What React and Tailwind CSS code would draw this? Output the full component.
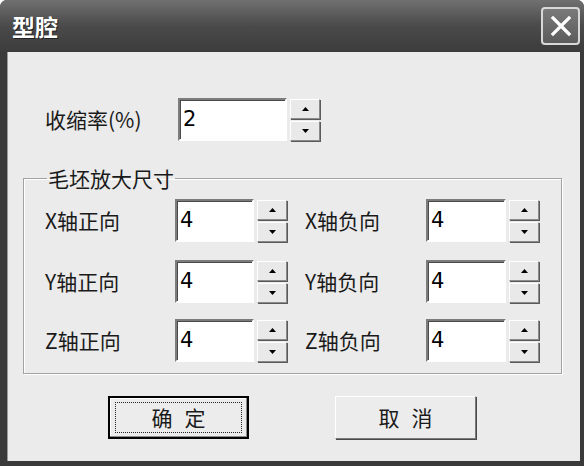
import React from 'react';

const cjk = { fontFamily: '"Noto Sans CJK SC", "Liberation Sans", sans-serif' };

// tiny arrow used on the spin buttons
const Arrow = ({ up }) => (
  <svg width="7" height="4" viewBox="0 0 7 4">
    {up ? <path d="M0 4 L3.5 0 L7 4 Z" fill="#000" /> : <path d="M0 0 L3.5 4 L7 0 Z" fill="#000" />}
  </svg>
);

const SpinButton = ({ up }) => (
  <div className="flex h-[20px] w-[30px] items-center justify-center border border-t-white border-l-white border-r-[#8a8a8a] border-b-[#8a8a8a] bg-[#e9e9e9] shadow-[1px_1px_0_#5a5a5a]">
    <Arrow up={up} />
  </div>
);

const Spinner = ({ value, width }) => (
  <div className="flex items-center gap-[3px]">
    <div
      className={`flex h-[43px] items-center border-2 border-t-[#7c7c7c] border-l-[#7c7c7c] border-r-white border-b-white bg-white pl-[3px] shadow-[inset_1px_1px_0_#4a4a4a] ${width}`}
    >
      <span className="text-[21px] leading-none text-black" style={{ fontFamily: '"DejaVu Sans", sans-serif' }}>
        {value}
      </span>
    </div>
    <div className="flex flex-col gap-[2px]">
      <SpinButton up />
      <SpinButton />
    </div>
  </div>
);

const AxisRow = ({ axis, className }) => (
  <div className={`flex items-center ${className}`}>
    <div className="w-[130px] text-[21px] leading-none text-[#1a1a1a]" style={cjk}>
      {axis}轴正向
    </div>
    <Spinner value="4" width="w-[79px]" />
    <div className="ml-[18px] w-[121px] text-[21px] leading-none text-[#1a1a1a]" style={cjk}>
      {axis}轴负向
    </div>
    <Spinner value="4" width="w-[80px]" />
  </div>
);

const Label2 = ({ a, b }) => (
  <span className="flex gap-[12px] text-[21px] leading-none text-[#1a1a1a]" style={cjk}>
    <span>{a}</span>
    <span>{b}</span>
  </span>
);

export default function App() {
  return (
    <div className="h-[470px] w-[588px] bg-white">
      <div className="flex h-[466px] w-[584px] flex-col rounded-t-[7px] bg-[#3a3a3a]">
        {/* title bar */}
        <div className="flex h-[52px] items-center justify-between rounded-t-[7px] bg-gradient-to-b from-[#707070] via-[#4a4a4a] to-[#3c3c3c] pl-[12px] pr-[4px]">
          <span
            className="text-[23px] font-bold leading-none text-white [text-shadow:1px_1px_0_#222]"
            style={cjk}
          >
            型腔
          </span>
          <div className="flex h-[38px] w-[39px] items-center justify-center rounded-[4px] border-2 border-[#d8d8d8] bg-gradient-to-b from-[#7a7a7a] to-[#5c5c5c]">
            <svg width="24" height="24" viewBox="0 0 24 24">
              <path d="M4 4 L20 20 M20 4 L4 20" stroke="#fff" strokeWidth="3.2" strokeLinecap="square" />
            </svg>
          </div>
        </div>

        {/* dialog body */}
        <div className="ml-[7px] mr-[4px] mb-[5px] flex flex-1 flex-col bg-[#ebebeb] shadow-[inset_1px_0_0_#9a9a9a]">
          <div className="mt-[46px] flex items-center">
            <div className="ml-[38px] w-[133px] text-[21px] leading-none text-[#1a1a1a]" style={cjk}>
              收缩率(%)
            </div>
            <Spinner value="2" width="w-[109px]" />
          </div>

          <fieldset className="ml-[16px] mt-[23px] h-[210px] w-[539px] border border-[#a2a2a2] px-[21px] shadow-[inset_1px_1px_0_#fff,1px_1px_0_#fff]">
            <legend className="ml-[2px] px-[1px] text-[21px] leading-[28px] text-[#1a1a1a]" style={cjk}>
              毛坯放大尺寸
            </legend>
            <AxisRow axis="X" className="mt-[7px]" />
            <AxisRow axis="Y" className="mt-[18px]" />
            <AxisRow axis="Z" className="mt-[16px]" />
          </fieldset>

          <div className="mt-[22px] flex">
            <div className="ml-[101px] flex h-[43px] w-[141px] items-center justify-center border-2 border-black bg-[#ececec] shadow-[inset_-1px_-1px_0_#8a8a8a,inset_1px_1px_0_#fff]">
              <div className="flex h-[31px] w-[127px] items-center justify-center border border-dotted border-[#222]">
                <Label2 a="确" b="定" />
              </div>
            </div>
            <div className="ml-[86px] flex h-[43px] w-[141px] items-center justify-center border border-t-white border-l-white border-r-[#7a7a7a] border-b-[#7a7a7a] bg-[#ececec] shadow-[1px_1px_0_#4a4a4a]">
              <Label2 a="取" b="消" />
            </div>
          </div>
        </div>
      </div>
    </div>
  );
}
